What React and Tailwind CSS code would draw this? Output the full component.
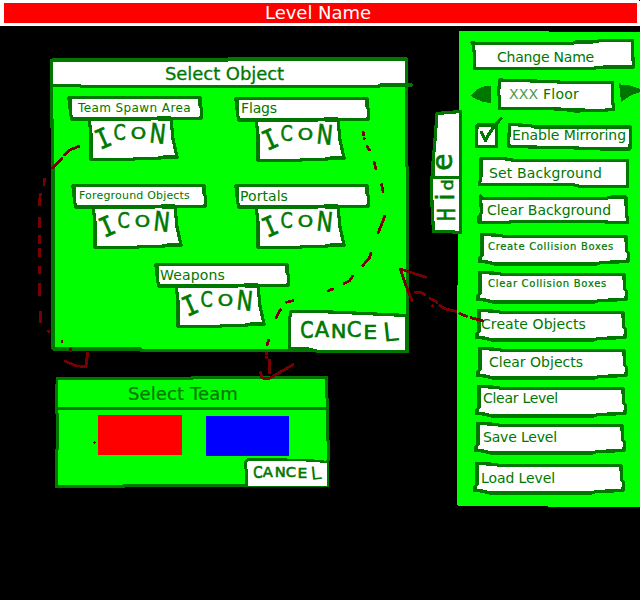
import { useLayoutEffect, useRef, useState } from "react";

const INK = "#007800";

// Text whose letter spacing is spread so that the line takes `width` pixels.
function FitText({ width, className, children, text }) {
  const ref = useRef(null);
  const [spacing, setSpacing] = useState(0);
  useLayoutEffect(() => {
    const natural = ref.current.getBoundingClientRect().width;
    setSpacing((width - natural) / text.length);
  }, [width, text]);
  return (
    <span ref={ref} style={{ letterSpacing: spacing }} className={`relative whitespace-pre pl-px leading-none ${className}`}>
      {children ?? text}
    </span>
  );
}

// A hand-drawn shape behind the content of its parent.
function Sketch({ view, fill, fillColor = "#fff", stroke, width = 3.2 }) {
  return (
    <svg viewBox={view} className="absolute inset-0 size-full overflow-visible" shapeRendering="crispEdges" aria-hidden="true">
      {fill && <path d={fill} fill={fillColor} />}
      {stroke && (
        <path d={stroke} fill="none" stroke={INK} strokeWidth={width} strokeLinejoin="round" strokeLinecap="round" />
      )}
    </svg>
  );
}

function Scrawl({ letters, className }) {
  return (
    <div className={`relative flex items-start [-webkit-text-stroke:0.6px_#007800] ${className}`}>
      {letters.map(([ch, cls], i) => (
        <span key={i} className={`block shrink-0 text-center leading-none ${cls}`}>
          {ch}
        </span>
      ))}
    </div>
  );
}

const ICON = [
  ["I", "ml-[6px] mt-[6px] w-[16px] text-[27px] font-['DejaVu_Sans_Mono',monospace] -rotate-[24deg] scale-x-90"],
  ["C", "ml-[1px] mt-[3px] w-[15px] text-[22px] scale-x-[.8]"],
  ["O", "ml-[3px] mt-[6px] w-[17px] text-[17px] scale-x-[1.15] scale-y-95"],
  ["N", "ml-[1px] mt-[1px] w-[18px] text-[27px] rotate-[6deg] scale-x-[.8]"],
];

const CANCEL = [
  ["C", "mt-[.04em] w-[.7em] scale-y-[1.15] scale-x-95"],
  ["A", "ml-[.05em] mt-[.06em] w-[.7em] scale-x-105 scale-y-[1.03]"],
  ["N", "ml-[.1em] mt-[.1em] w-[.75em] scale-x-105"],
  ["C", "ml-[.07em] mt-[.04em] w-[.7em] scale-x-105 scale-y-105"],
  ["E", "ml-[.14em] mt-[.14em] w-[.63em] scale-x-110"],
  ["L", "ml-[.4em] mt-[.14em] w-[.56em] -rotate-6 scale-x-[1.4] scale-y-[1.3] [-webkit-text-stroke:0px]"],
];

const LABEL = "M0 0.5H130V8L131.5 12L131 21.5H106L100 21H88L80 22H1.5L0 11Z";
const LABEL_INK = `${LABEL}M-1 0.5L-1.5 1.5L0 4M88 22H102M129.5 21L131.5 20`;
const ICON_BOX = "M0 -1L2 15V40.5H40L50 39.5H70L75 38H88L84 20L82 -1";
const ICON_BOX_INK = `${ICON_BOX}M70 38.5H88`;

function Slot({ text, width, textClass, className }) {
  return (
    <div className={`w-[130px] shrink-0 ${className}`}>
      <div className="relative z-10 h-[22px]">
        <Sketch view="0 0 130 22" fill={LABEL} stroke={LABEL_INK} />
        <div className="flex">
          <FitText text={text} width={width} className={textClass} />
        </div>
      </div>
      <div className="relative ml-[19px] h-[41px] w-[88px]">
        <Sketch view="0 0 88 41" fill={ICON_BOX} stroke={ICON_BOX_INK} />
        <Scrawl letters={ICON} className="" />
      </div>
    </div>
  );
}

function SelectObject() {
  return (
    <section className="relative ml-[52px] mt-[33px] h-[293px] w-[356px]">
      <Sketch view="52 59 356 293" fill="M52 60H407V351H318V350H141V349H52Z" fillColor="#00ff00" />
      <Sketch
        view="52 59 356 293"
        fill="M53 60H406V86H53Z"
        stroke="M51.5 60.5V100L53 168V349H141V350.5H318V351.5H407.5V167L406.5 166V59H229L228 60H52M53 85.5H80L81 86.5H379L380 85H412"
      />
      <h2 className="flex h-[27px] pl-[112px] pt-[6px]">
        <FitText text="Select Object" width={120} className="text-[18px] [-webkit-text-stroke:0.3px_#007800]" />
      </h2>
      <div className="ml-[19px] flex h-[89px] pt-[11px]">
        <Slot text="Team Spawn Area" width={114} textClass="ml-[7px] mt-[5px] text-[12px]" className="-ml-px" />
        <Slot text="Flags" width={37} textClass="ml-[3px] mt-[3px] text-[14px]" className="ml-[37px] mt-px" />
      </div>
      <div className="ml-[22px] flex h-[79px] pt-[10px]">
        <Slot text="Foreground Objects" width={112} textClass="ml-[4px] mt-[5px] text-[11px]" className="" />
        <Slot text="Portals" width={49} textClass="ml-[2px] mt-[4px] text-[14px]" className="ml-[33px]" />
      </div>
      <div className="ml-[105px] flex pt-[10px]">
        <Slot text="Weapons" width={66} textClass="ml-[2px] mt-[4px] text-[14px]" className="" />
        <button className="relative ml-[2px] mt-[48px] flex h-[39px] w-[118px] items-start">
          <Sketch
            view="289 312 118 39"
            fill="M290 312L343 312L375 314L407 315.5V350H315L307 348.5H289Z"
            stroke="M407 315.5L375 314L343 312.5L318 311.5H291L289.5 319V348.5H307L318 351.5H407Z"
          />
          <Scrawl letters={CANCEL} className="ml-[11px] mt-[7px] text-[20px]" />
        </button>
      </div>
    </section>
  );
}

function SelectTeam() {
  return (
    <section className="relative ml-[57px] mt-[26px] h-[109px] w-[271px]">
      <Sketch
        view="57 378 271 109"
        fill="M57 378H327V485H124V486H57Z"
        fillColor="#00ff00"
        width={2.8}
        stroke="M57 378.5H192V377.5H326.5V397L327.5 399V440L328.5 441V460L327.5 461V485.5H124V486.5H56.5V450L57.5 449V414L56.5 413ZM57 408.5H327"
      />
      <h2 className="relative flex h-[31px] pl-[70px] pt-[7px]">
        <FitText text="Select Team" width={111} className="text-[18px] [-webkit-text-stroke:0.2px_#007800]" />
      </h2>
      <div className="relative flex pl-[41px] pt-[6px]">
        <div className="h-[40px] w-[84px] bg-[#ff0000]" />
        <div className="ml-[24px] mt-px h-[40px] w-[83px] bg-[#0000ff]" />
      </div>
      <button className="relative ml-[189px] mt-[4px] flex h-[26px] w-[81px] items-start">
        <Sketch
          view="246 460 81 26"
          fill="M246 460H310L327 462V486H246Z"
          width={2.4}
          stroke="M246.5 485V470L245.5 468V462L248 459.5H280L312 460.5L327 462"
        />
        <Scrawl letters={CANCEL} className="ml-[7px] mt-[4px] text-[14px] [-webkit-text-stroke:0.3px_#007800]" />
      </button>
    </section>
  );
}

const HIDE = [
  ["H", "ml-[9px] mt-[2px] w-[18px] text-[25px] scale-x-[.7]"],
  ["i", "ml-[5px] mt-[1px] w-[8px] text-[25px]"],
  ["d", "ml-[1px] mt-[8px] w-[14px] text-[16px] scale-x-110"],
  ["e", "ml-[7px] mt-[-3px] w-[18px] text-[28px]"],
];

function HideTab() {
  return (
    <button className="relative z-10 -mr-[3px] ml-[24px] mt-[86px] flex h-[121px] w-[29px] items-start">
      <Sketch
        view="432 112 29 121"
        fill="M436.5 113.5L460.5 112V232H433.5L432 177L433 160Z"
        stroke="M460.5 111.5L437 113.5L435 140L433 162V177H431.5L432 205L433.5 231.5H447L460.5 232.5ZM432 177.5H460"
      />
      <div className="relative h-[29px] w-[121px] shrink-0 origin-top-left translate-y-[121px] -rotate-90">
        <Scrawl letters={HIDE} className="" />
      </div>
    </button>
  );
}

const ROUGH =
  "M1.7 -0.5L20 0.3L24 1.4H146L146.3 16L148.3 18L148 26.7L122 27.3L116 29H15L7 27L-0.7 26.7V23.5L1.7 21Z";
const ROUGH_INK = `${ROUGH}M0.5 24V26M2 0V21`;

const ACTIONS = [
  ["Create Collision Boxes", 127, "ml-[7px] mt-[7px] text-[10px] [-webkit-text-stroke:0.2px_#007800]", "ml-[22px] mt-[12px]"],
  ["Clear Collision Boxes", 120, "ml-[9px] mt-[6px] text-[10px] [-webkit-text-stroke:0.2px_#007800]", "ml-[20px] mt-[8px]"],
  ["Create Objects", 106, "ml-[3px] mt-[6px] text-[14px]", "ml-[19px] mt-[8px]"],
  ["Clear Objects", 95, "ml-[10px] mt-[6px] text-[14px]", "ml-[20px] mt-[8px]"],
  ["Clear Level", 76, "ml-[5px] mt-[4px] text-[14px]", "ml-[19px] mt-[8px]"],
  ["Save Level", 75, "ml-[6px] mt-[6px] text-[14px]", "ml-[18px] mt-[7px]"],
  ["Load Level", 75, "ml-[5px] mt-[7px] text-[14px]", "ml-[17px] mt-[10px]"],
];

function Sidebar() {
  return (
    <aside className="relative mt-[6px] h-[474px] w-[182px] shrink-0">
      <svg viewBox="458 32 182 474" className="absolute inset-0 size-full overflow-visible" shapeRendering="crispEdges" aria-hidden="true">
        <path d="M459 31H549V32H640V507H548V506H458L457 505V290L458 280Z" fill="#00ff00" />
      </svg>
      <button className="relative ml-[16px] mt-[9px] flex h-[29px] w-[160px]">
        <Sketch
          view="474 41 160 29"
          fill="M475 43H575L585 41H633V68L475 69Z"
          stroke="M472 42.5L476 43.5H572L576 42H592L602 40.5H632.5V50L633.5 67H604L590 68.5H474.5V54L473 44"
        />
        <FitText text="Change Name" width={98} className="ml-[22px] mt-[9px] text-[14px]" />
      </button>
      <div className="relative ml-[13px] mt-[11px] flex h-[29px]">
        <svg viewBox="471 81 20 29" width="20" height="29" shapeRendering="crispEdges" className="shrink-0">
          <path d="M471 95.5L478 89L486 85.5L491 86V103L483 102L474 98Z" fill={INK} />
        </svg>
        <div className="relative ml-[9px] flex h-[29px] w-[113px]">
          <Sketch
            view="500 81 113 29"
            fill="M500 80L550 81L613 83V109H590L580 110L500 108Z"
            stroke="M499.5 80L550 81.5L567 82.5H612.5V98L613.5 109.5L600 110.5L575 111L560 109L530 108.5H499.5V96L498.5 95ZM562 109.5H584"
          />
          <FitText text="XXX Floor" width={71} className="ml-[8px] mt-[6px] text-[14px]">
            <span className="text-[#4c9a4c]">XXX</span> Floor
          </FitText>
        </div>
        <svg viewBox="619 81 21 29" width="21" height="29" shapeRendering="crispEdges" className="ml-[6px] shrink-0">
          <path d="M619 83L622 85L630 85.5L640 89V92L632 95L627 98L621 102Z" fill={INK} />
        </svg>
      </div>
      <div className="ml-[18px] mt-[14px] flex h-[25px]">
        <div className="relative h-[25px] w-[21px]">
          <Sketch
            view="476 124 21 25"
            fill="M477 125H496V147H477Z"
            stroke="M477 125H496.5V146.5H476.5ZM481.5 132.5L485.5 140.5L489 134L494 126.5L501 118.5"
          />
        </div>
        <div className="relative ml-[12px] flex h-[25px] w-[122px]">
          <Sketch
            view="509 124 122 25"
            fill="M509 124.5L530 125.5L535 127H630V149L563 147.5L509 146Z"
            stroke="M509.5 124.5L530 125.5L535 127H630.5L630 149H603L563 147.5L530 147L508.5 146Z"
          />
          <FitText text="Enable Mirroring" width={115} className="ml-[2px] mt-[4px] text-[14px]" />
        </div>
      </div>
      <button className="relative ml-[22px] mt-[10px] flex h-[28px] w-[148px]">
        <Sketch
          view="480 159 148 28"
          fill="M481 159H503L515 161H627V186H578L573 185H480Z"
          stroke="M481 158.5H503L515 160.5H627.5V186.5H580L573 184.5H479.5L481 176Z"
        />
        <FitText text="Set Background" width={114} className="ml-[8px] mt-[7px] text-[14px]" />
      </button>
      <button className="relative ml-[22px] mt-[10px] flex h-[26px] w-[148px]">
        <Sketch
          view="480 197 148 26"
          fill="M482 198H626V222H479L481 212Z"
          stroke="M480.5 196L483 198.5H605L612 197H626V205L627.5 222.5H613L600 221.5H515L505 222.5H479L479 217L481.5 213ZM480.5 217V221"
        />
        <FitText text="Clear Background" width={125} className="ml-[6px] mt-[6px] text-[14px]" />
      </button>
      {ACTIONS.map(([text, width, textClass, boxClass]) => (
        <button key={text} className={`relative flex h-[30px] w-[148px] ${boxClass}`}>
          <Sketch view="0 0 148 30" fill={ROUGH} stroke={ROUGH_INK} />
          <FitText text={text} width={width} className={textClass} />
        </button>
      ))}
    </aside>
  );
}

// Dashed arrows that link the menu entries to the dialogs they open.
const ARROWS = [
  "M79 146.3L70 150L64.3 154.7M61.7 158.3L56.7 164.3L52.3 167.7M44.3 179L44 184.3M40.3 194L39.3 205M39.5 218V226.5M39.5 236V242.7M39.5 249.5V255.5M39.5 267V273M39.5 284.5V295M40.5 312V322M48.7 331V331.5M62 341.3V341.8M70.5 349V351",
  "M65.3 361.3L76.7 366L86 366.3L87.5 353.3",
  "M363.3 132.5V135M364.3 138.3V138.6M367 146.3L369.3 150M374.3 162.5L375.7 168.5M381.7 184.5L383 191.5M384.7 216L381 226L378.3 232.5M370.7 253.5L369.3 258.3L362.7 265.5M352.7 276L349.3 281L344.3 283.3M333 289L328.5 290.7M293 300.7L286.5 302.3M280.5 309.5L276 317.5M268.7 340L267 345M266.7 353V354M266.7 357V357.5M269.7 360V373",
  "M260.7 372.7L262 378L269.3 378.5L277 374L293 364.7",
  "M425.5 277.3L400.5 269L406 286L412 300.5M415.5 292.3L421.5 292.7L425 294.7M430 298.3L437 302.3M432.7 305.7V306M439.5 305.5L446.7 309.3L456 311.3M459.5 313.5L466.5 316.3M471 317.7L482.5 320.7",
];

export default function App() {
  return (
    <div className="relative flex h-[600px] w-[640px] flex-col overflow-hidden bg-black font-['DejaVu_Sans',sans-serif] text-[#007800]">
      <header className="h-[26px] shrink-0 bg-white pb-[3px] pl-[4px] pr-[3px] pt-[3px]">
        <h1 className="flex h-[20px] bg-[#ff0000] pl-[260px] pt-px text-white">
          <FitText text="Level Name" width={107} className="text-[18px]" />
        </h1>
      </header>
      <main className="flex items-start">
        <div className="w-[408px] shrink-0">
          <SelectObject />
          <SelectTeam />
        </div>
        <HideTab />
        <Sidebar />
      </main>
      <svg viewBox="0 0 640 600" className="pointer-events-none absolute inset-0 z-20 size-full" shapeRendering="crispEdges" aria-hidden="true">
        {ARROWS.map((d) => (
          <path key={d} d={d} fill="none" stroke="#780000" strokeWidth="2.8" strokeLinecap="round" strokeLinejoin="round" />
        ))}
        <path d="M94 441H95V442H96V443H95V444H94V443H93V442H94Z" fill="#780000" />
        <path d="M639 0H640V1H639Z" fill="#000" />
      </svg>
    </div>
  );
}
